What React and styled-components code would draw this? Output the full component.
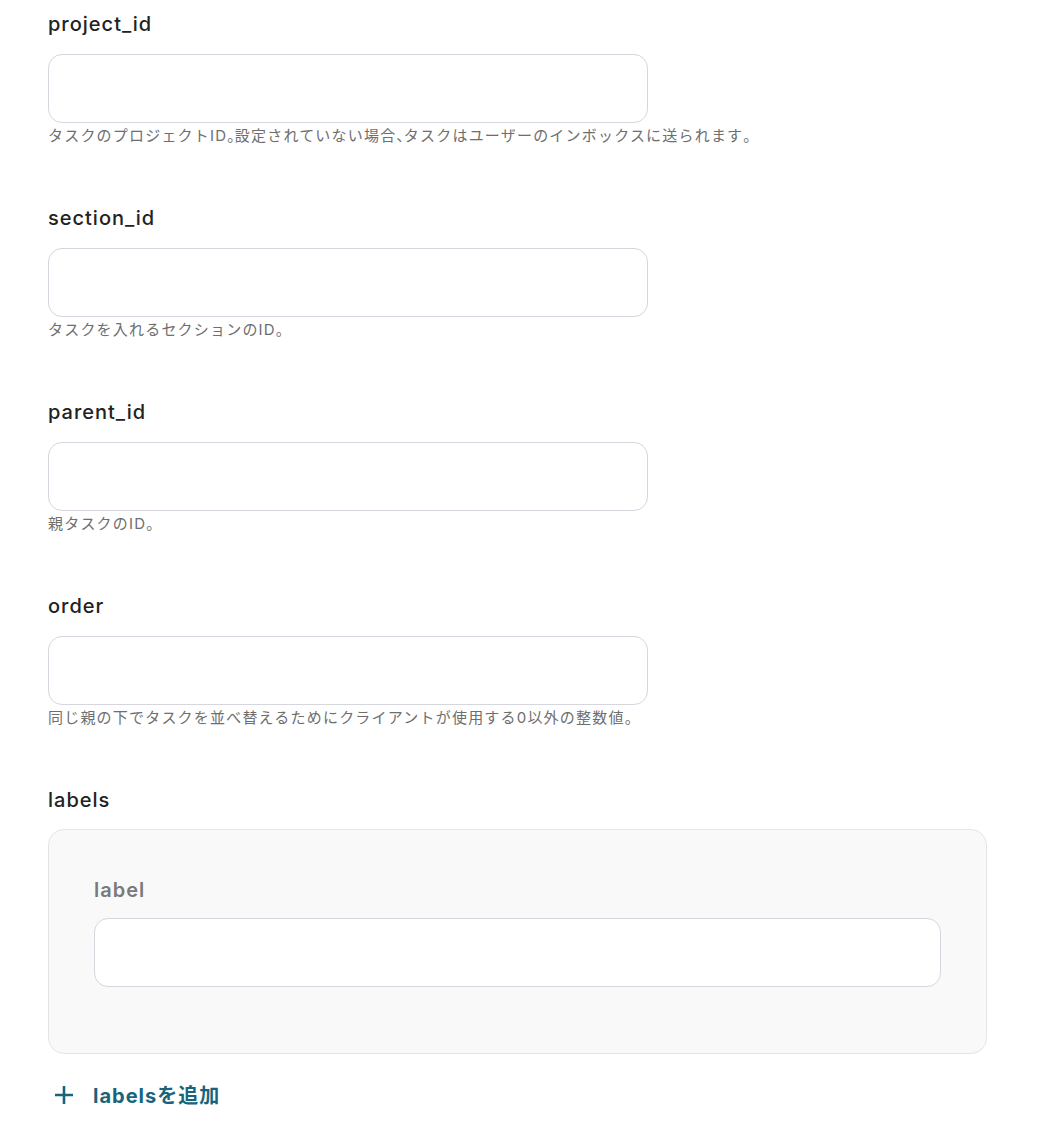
import React from "react";
import styled, { createGlobalStyle } from "styled-components";

const GlobalStyle = createGlobalStyle`
  body {
    margin: 0;
    background: #ffffff;
    font-family: Inter, "Noto Sans CJK JP", sans-serif;
    color: #222222;
  }
`;

const Page = styled.div`
  padding: 10px 48px 30px;
`;

const Field = styled.div`
  display: flex;
  flex-direction: column;
  width: 600px;
  margin-bottom: 58px;
`;

const Label = styled.label`
  font-size: 20px;
  line-height: 28px;
  letter-spacing: 1px;
  font-weight: ${(p) => (p.muted ? 600 : 500)};
  color: ${(p) => (p.muted ? "#7a7a7a" : "#222222")};
  margin-bottom: ${(p) => p.gap || "16px"};
`;

const Input = styled.input`
  box-sizing: border-box;
  width: 100%;
  height: 69px;
  border: 1px solid #d5d6de;
  border-radius: 14px;
  background: #ffffff;
  padding: 0 18px;
  font-size: 16px;
  font-family: inherit;
  outline: none;
`;

const Help = styled.div`
  margin-top: 3px;
  font-size: 15px;
  line-height: 20px;
  letter-spacing: 1.2px;
  white-space: nowrap;
  color: #6e6e6e;
`;

const Punct = styled.span`
  font-feature-settings: "halt";
  letter-spacing: 0;
`;

const ArrayBox = styled.div`
  box-sizing: border-box;
  width: 939px;
  height: 225px;
  border: 1px solid #e4e4e6;
  border-radius: 16px;
  background: #f9f9f9;
  padding: 46px 45px 0 45px;
  display: flex;
  flex-direction: column;
`;

const AddButton = styled.button`
  display: flex;
  align-items: center;
  gap: 19px;
  margin-top: 26px;
  padding: 0 0 0 6px;
  border: none;
  background: none;
  font-family: Inter, "Noto Sans CJK JP", sans-serif;
  font-size: 20px;
  font-weight: 700;
  letter-spacing: 1px;
  color: #18647c;
  cursor: pointer;
`;

const fields = [
  {
    name: "project_id",
    help: "タスクのプロジェクトID。設定されていない場合、タスクはユーザーのインボックスに送られます。",
  },
  { name: "section_id", help: "タスクを入れるセクションのID。" },
  { name: "parent_id", help: "親タスクのID。" },
  {
    name: "order",
    help: "同じ親の下でタスクを並べ替えるためにクライアントが使用する0以外の整数値。",
  },
];

// narrow the Japanese punctuation like the original font does
function HelpText({ text }) {
  return text
    .split(/([。、])/)
    .map((part, i) =>
      part === "。" || part === "、" ? <Punct key={i}>{part}</Punct> : part
    );
}

function PlusIcon() {
  return (
    <svg width="20" height="20" viewBox="0 0 20 20" fill="none">
      <path d="M10 1v18M1 10h18" stroke="#18647c" strokeWidth="2.6" />
    </svg>
  );
}

export default function App() {
  return (
    <Page>
      <GlobalStyle />
      {fields.map((f) => (
        <Field key={f.name}>
          <Label>{f.name}</Label>
          <Input />
          <Help>
            <HelpText text={f.help} />
          </Help>
        </Field>
      ))}
      <div>
        <Label as="div" gap="15px">labels</Label>
        <ArrayBox>
          <Label muted gap="14px">label</Label>
          <Input />
        </ArrayBox>
        <AddButton>
          <PlusIcon />
          labelsを追加
        </AddButton>
      </div>
    </Page>
  );
}
